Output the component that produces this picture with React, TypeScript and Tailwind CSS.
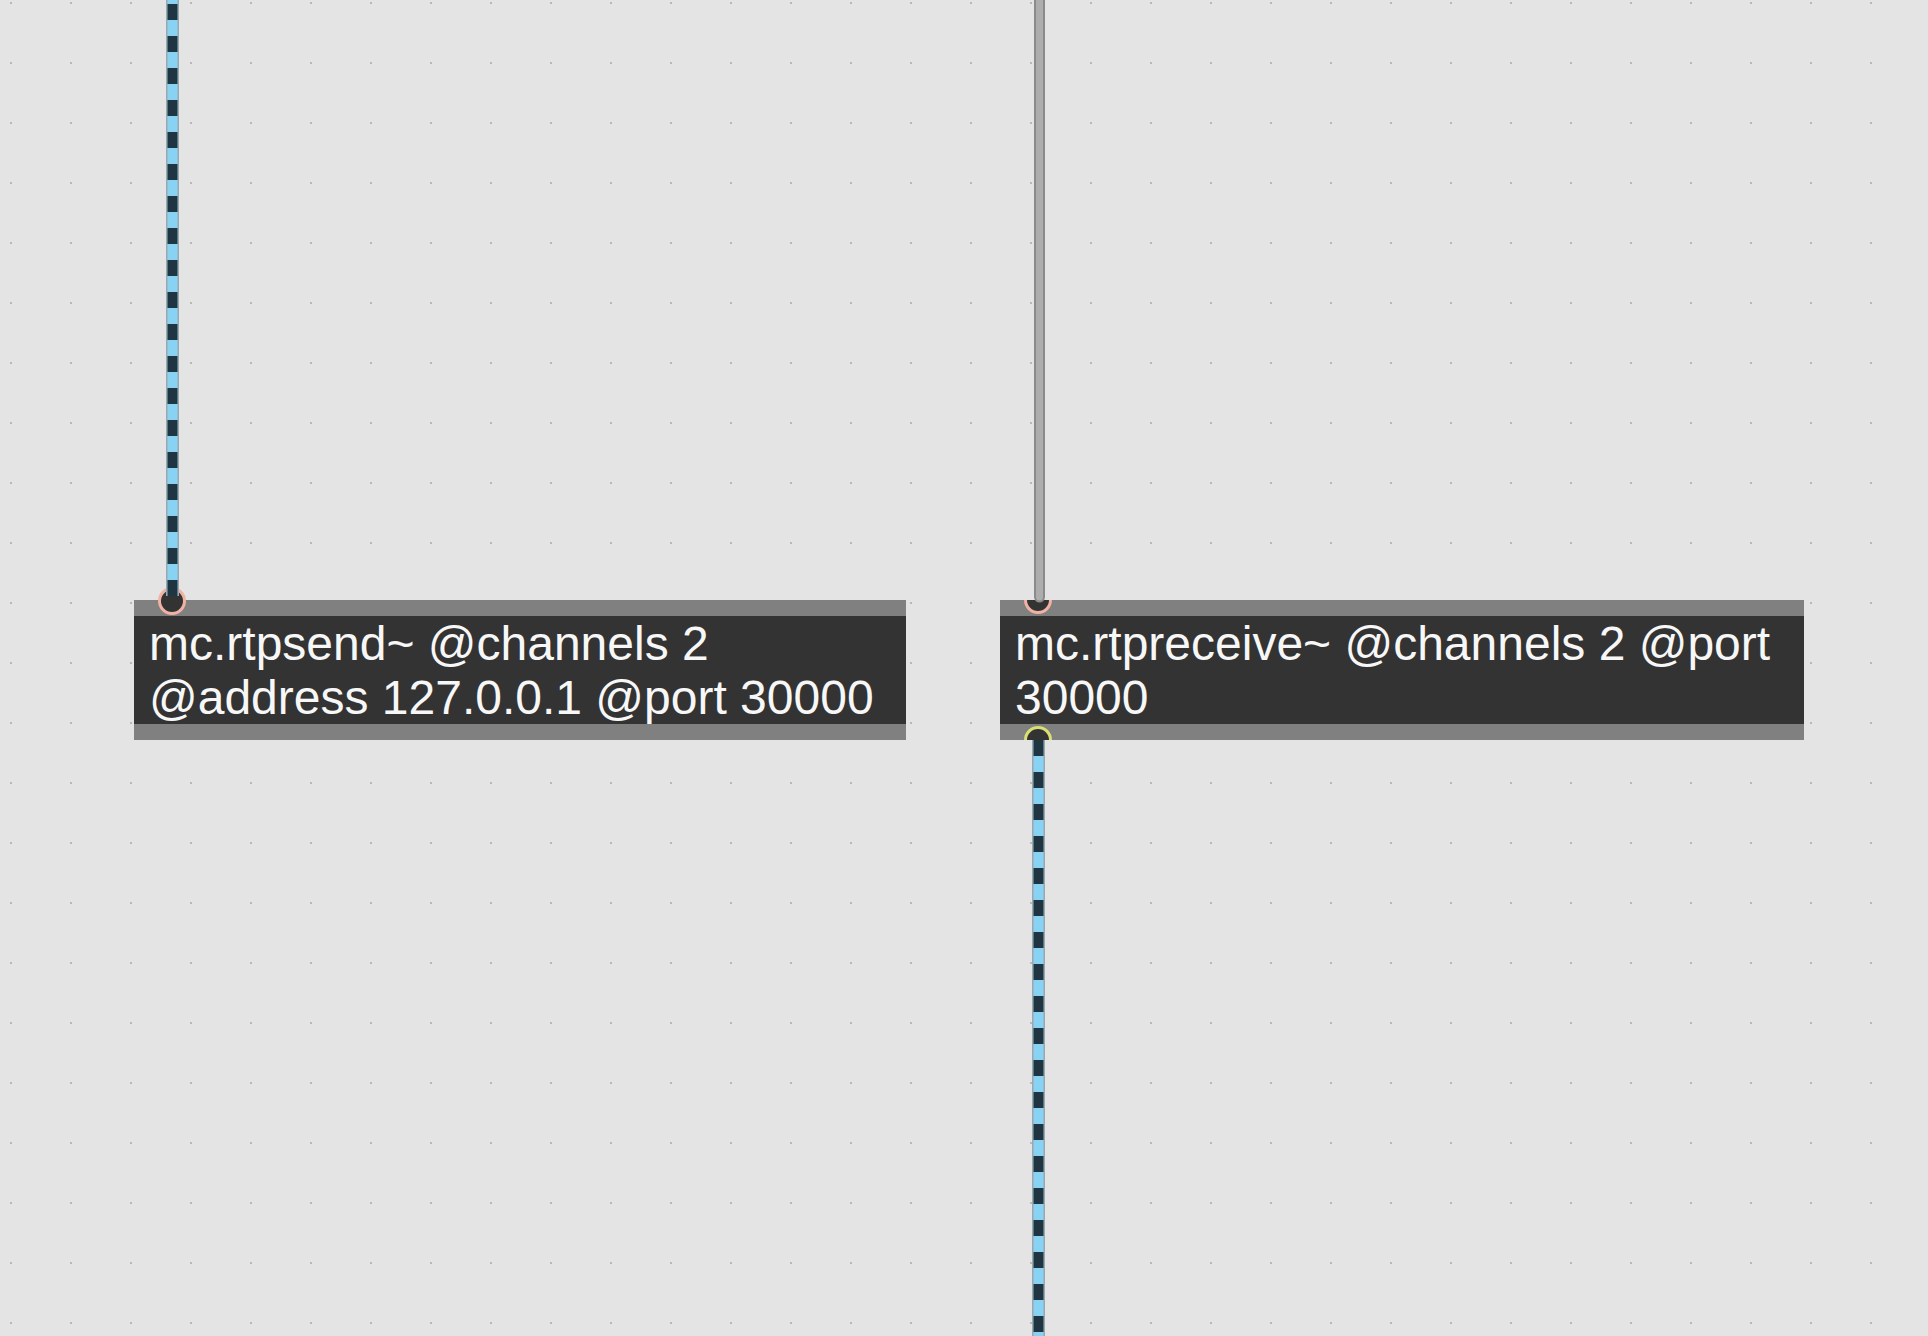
import React from "react";

interface PatchBoxProps {
  width: string;
  lines: string[];
  inlet: "open" | "clipped";
  outlet?: boolean;
}

// Max-style object box: grey rails top and bottom, dark body with wrapped text
const PatchBox = (props: PatchBoxProps) => {
  const { width, lines, inlet, outlet } = props;

  return (
    <div className={`relative shrink-0 ${width}`}>
      <div className="relative flex flex-col h-[140px] overflow-hidden">
        <div className="h-[16px] bg-[#808080]" />
        <div className="h-[108px] bg-[#333333] pl-[15px] pt-[1px]">
          {lines.map((line, i) => (
            <div key={i} className="text-[48px] leading-[54px] text-[#f7f7f7] whitespace-nowrap font-['Liberation_Sans',Arial,sans-serif]">
              {line}
            </div>
          ))}
        </div>
        <div className="h-[16px] bg-[#808080]" />
        {inlet === "clipped" && (
          <div className="absolute left-[24px] top-[-14px] w-[28px] h-[28px] rounded-full border-[3px] border-[#f0b2a2] bg-[#333333]" />
        )}
        {outlet && (
          <div className="absolute left-[24px] top-[126px] w-[28px] h-[28px] rounded-full border-[3px] border-[#d9df72] bg-[#333333]" />
        )}
      </div>
      {inlet === "open" && (
        <div className="absolute left-[24px] top-[-13px] w-[28px] h-[28px] rounded-full border-[3px] border-[#f0b2a2] bg-[#333333]" />
      )}
    </div>
  );
};

// signal cords: grey edge, light blue core, dark dashes
const McCord = ({ x, y1, y2 }: { x: number; y1: number; y2: number }) => (
  <g>
    <line x1={x} y1={y1} x2={x} y2={y2} stroke="#9ba6ad" strokeWidth={13} />
    <line x1={x} y1={y1} x2={x} y2={y2} stroke="#88d3f4" strokeWidth={10} />
    <line x1={x} y1={y1} x2={x} y2={y2} stroke="#1f3541" strokeWidth={10} strokeDasharray="16 16" />
  </g>
);

const App = () => {
  return (
    <div className="relative w-full h-[1336px] overflow-hidden bg-[#e4e4e4] bg-[radial-gradient(circle,#b9b9b9_1px,transparent_1.5px)] bg-[size:60px_60px] bg-[position:-19px_-27px]">
      <div className="flex items-start gap-[94px] pt-[600px] pl-[134px]">
        <PatchBox
          width="w-[772px]"
          lines={["mc.rtpsend~ @channels 2", "@address 127.0.0.1 @port 30000"]}
          inlet="open"
        />
        <PatchBox
          width="w-[804px]"
          lines={["mc.rtpreceive~ @channels 2 @port", "30000"]}
          inlet="clipped"
          outlet
        />
      </div>

      <svg className="absolute inset-0 pointer-events-none" width="1928" height="1336">
        <McCord x={172.5} y1={-28} y2={596} />
        <line x1={1039.5} y1={-20} x2={1039.5} y2={597} stroke="#8a8a8a" strokeWidth={11} strokeLinecap="round" />
        <line x1={1039.5} y1={-20} x2={1039.5} y2={597} stroke="#adadad" strokeWidth={7} strokeLinecap="round" />
        <McCord x={1038.5} y1={740} y2={1350} />
      </svg>
    </div>
  );
};

export default App;
